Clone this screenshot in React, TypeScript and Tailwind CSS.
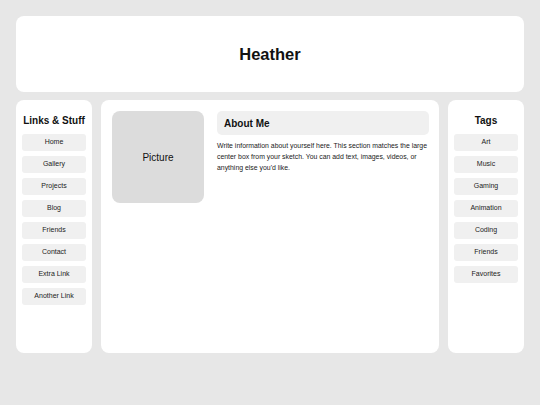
import React from "react";

const links = ["Home", "Gallery", "Projects", "Blog", "Friends", "Contact", "Extra Link", "Another Link"];
const tags = ["Art", "Music", "Gaming", "Animation", "Coding", "Friends", "Favorites"];

function Side({ title, items }: { title: string; items: string[] }) {
  return (
    <div className="bg-white rounded-[8px] h-[253px] px-[6px] pt-[14px] flex flex-col items-center">
      <div className="text-[10px] leading-[14px] font-bold text-[#111] mb-[6px] whitespace-nowrap">{title}</div>
      <div className="flex flex-col gap-[5px] w-[64px]">
        {items.map((t) => (
          <div
            key={t}
            className="h-[17px] rounded-[3px] bg-[#f0f0f0] flex items-center justify-center text-[7px] text-[#222] whitespace-nowrap"
          >
            {t}
          </div>
        ))}
      </div>
    </div>
  );
}

export default function App() {
  return (
    <div
      className="w-[540px] h-[405px] bg-[#e7e7e7] px-4 pt-4"
      style={{ fontFamily: '"Liberation Sans", Arial, sans-serif' }}
    >
      <div className="bg-white rounded-[8px] h-[76px] flex items-center justify-center">
        <h1 className="text-[16.5px] font-bold text-[#111]">Heather</h1>
      </div>
      <div className="grid grid-cols-[76px_1fr_76px] gap-[9px] mt-[8px]">
        <Side title="Links & Stuff" items={links} />
        <div className="bg-white rounded-[8px] h-[253px] pl-[11px] pr-[10px] pt-[11px] flex gap-[13px]">
          <div className="w-[92px] h-[92px] shrink-0 rounded-[8px] bg-[#dcdcdc] flex items-center justify-center text-[10px] text-[#111]">
            Picture
          </div>
          <div className="flex-1">
            <div className="h-[24px] rounded-[5px] bg-[#f0f0f0] flex items-center px-[7px] text-[10px] font-bold text-[#111]">
              About Me
            </div>
            <p className="mt-[6px] mr-[-2px] text-[6.9px] leading-[10.8px] text-[#1a1a1a]">
              Write information about yourself here. This section matches the large center box from your sketch. You can add text, images, videos, or anything else you'd like.
            </p>
          </div>
        </div>
        <Side title="Tags" items={tags} />
      </div>
    </div>
  );
}
